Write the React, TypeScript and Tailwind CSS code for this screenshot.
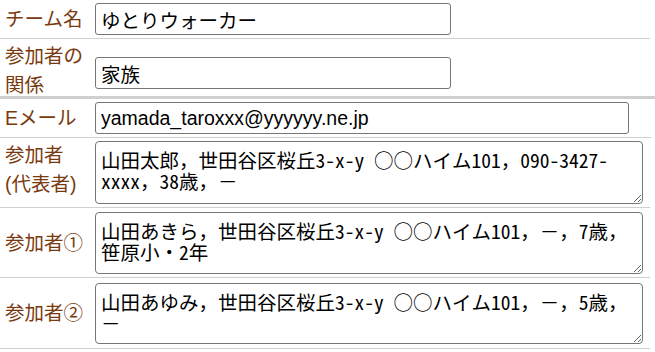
import React from "react";

const labelCls =
  "w-[95px] shrink-0 pl-[5px] text-[19.5px] text-[#7a3a0f] [font-family:'Liberation_Sans','Noto_Sans_CJK_JP',sans-serif]";
const inputCls =
  "h-[32px] border border-[#767676] rounded-[3px] px-[5px] text-[19.5px] text-black bg-white outline-none [font-family:'Liberation_Sans','Noto_Sans_CJK_JP',sans-serif]";
const areaCls =
  "w-[548px] border border-[#767676] rounded-[4px] pl-[5px] pr-[2px] pt-[7px] text-[19.5px] leading-[21px] text-black bg-white outline-none overflow-hidden resize [font-family:'Noto_Sans_Mono_CJK_JP','Noto_Sans_CJK_JP',monospace]";

export default function App() {
  return (
    <div className="w-[655px] h-[352px] bg-white overflow-hidden">
      {/* Row 1 */}
      <div className="flex items-center h-[39px] w-[650px] border-b border-[#cfcfcf]">
        <div className={labelCls + " leading-[28px]"}>チーム名</div>
        <input className={inputCls + " w-[356px]"} readOnly value="ゆとりウォーカー" />
      </div>
      {/* Row 2 */}
      <div className="flex items-start h-[60px] w-full border-b-[3px] border-[#cfcfcf]">
        <div className={labelCls + " leading-[29px] pt-[3px]"}>
          参加者の
          <br />
          関係
        </div>
        <input className={inputCls + " w-[356px] mt-[18px]"} readOnly value="家族" />
      </div>
      {/* Row 3 */}
      <div className="flex items-center h-[39px] w-[651px] border-b border-[#cfcfcf]">
        <div className={labelCls + " leading-[28px]"}>Eメール</div>
        <input
          className={inputCls + " w-[534px] h-[31px]"}
          readOnly
          value="yamada_taroxxx@yyyyyy.ne.jp"
        />
      </div>
      {/* Row 4 */}
      <div className="flex items-center h-[70px] w-[650px] border-b border-[#cfcfcf]">
        <div className={labelCls + " self-start leading-[29px] pt-[3px]"}>
          参加者
          <br />
          (代表者)
        </div>
        <textarea
          className={areaCls + " h-[63px]"}
          readOnly
          value={"山田太郎，世田谷区桜丘3-x-y ○○ハイム101，090-3427-\nxxxx，38歳，－"}
        />
      </div>
      {/* Row 5 */}
      <div className="flex items-center h-[70px] w-[650px] border-b border-[#cfcfcf]">
        <div className={labelCls + " leading-[28px]"}>参加者①</div>
        <textarea
          className={areaCls + " h-[62px]"}
          readOnly
          value={"山田あきら，世田谷区桜丘3-x-y ○○ハイム101，－，7歳，\n笹原小・2年"}
        />
      </div>
      {/* Row 6 */}
      <div className="flex items-center h-[71px] w-[650px] border-b border-[#cfcfcf]">
        <div className={labelCls + " leading-[28px]"}>参加者②</div>
        <textarea
          className={areaCls + " h-[61px]"}
          readOnly
          value={"山田あゆみ，世田谷区桜丘3-x-y ○○ハイム101，－，5歳，\n－"}
        />
      </div>
    </div>
  );
}
